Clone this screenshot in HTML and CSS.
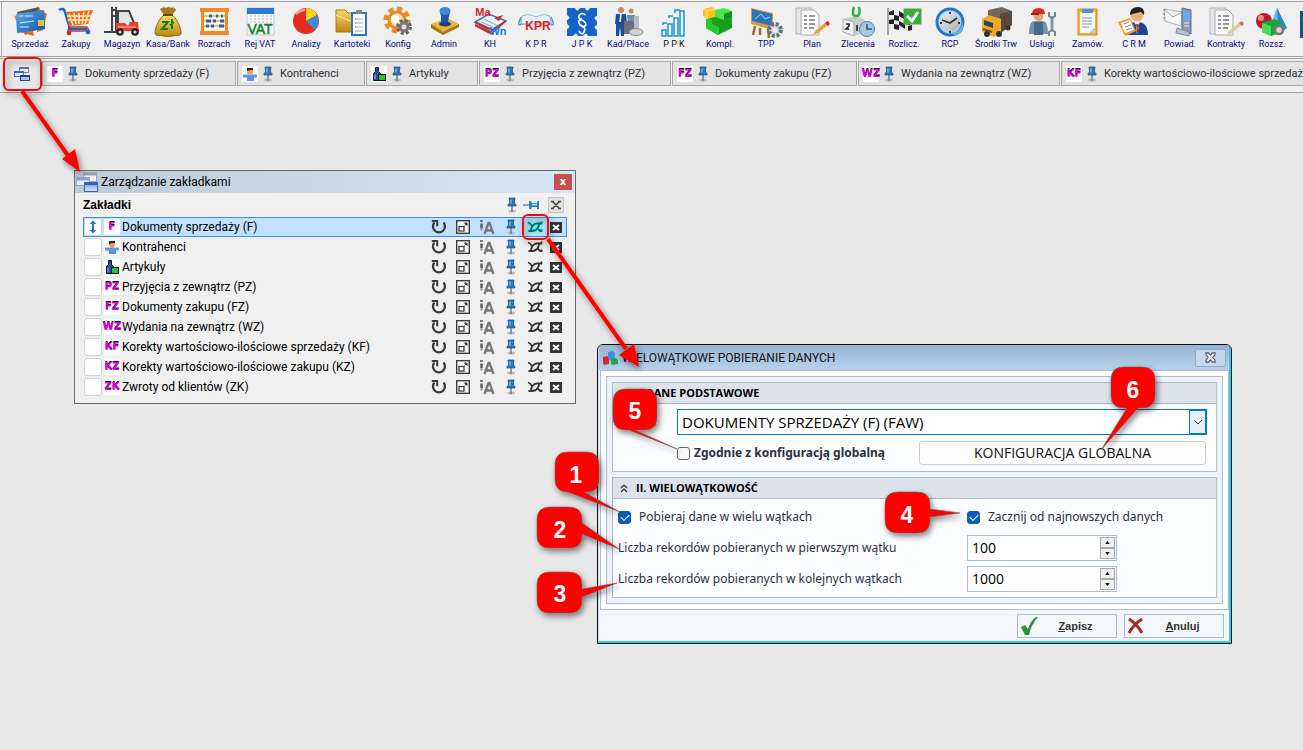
FILE: index.html
```html
<!DOCTYPE html>
<html lang="pl">
<head>
<meta charset="utf-8">
<title>Zarządzanie zakładkami</title>
<link rel="stylesheet" href="styles.css">
</head>
<body>
<svg class="defs" aria-hidden="true">
  <defs>
    <linearGradient id="gBlue" x1="0" y1="0" x2="1" y2="1"><stop offset="0" stop-color="#5fb0ee"/><stop offset="1" stop-color="#0b4fa8"/></linearGradient>
    <linearGradient id="gGold" x1="0" y1="0" x2="0" y2="1"><stop offset="0" stop-color="#fbd96b"/><stop offset="1" stop-color="#bf8410"/></linearGradient>
    <linearGradient id="gGrey" x1="0" y1="0" x2="1" y2="1"><stop offset="0" stop-color="#fafafa"/><stop offset="1" stop-color="#9aa3ab"/></linearGradient>
    <linearGradient id="gWin" x1="0" y1="0" x2="0" y2="1"><stop offset="0" stop-color="#6d9be8"/><stop offset="1" stop-color="#dfe9fb"/></linearGradient>
    <filter id="shadow" x="-30%" y="-30%" width="170%" height="170%"><feDropShadow dx="2" dy="3" stdDeviation="3" flood-color="#000" flood-opacity=".5"/></filter>
  </defs>
  <symbol id="pin" viewBox="0 0 12 16">
    <ellipse cx="6" cy="14" rx="4" ry="1.500" fill="#bbb"/>
    <path d="M6 9v6" stroke="#777" stroke-width="1.400"/>
    <path d="M3 1h6v1.500H8.500V6L10 7.500V9H2V7.500L3.500 6V2.500H3z" fill="#2d74b8" stroke="#174f8c" stroke-width=".7"/>
    <path d="M5 2.500V6.500" stroke="#a8d4f5"/>
  </symbol>
  <symbol id="refresh" viewBox="0 0 16 16">
    <path d="M3.400 3.500A6 6 0 1 0 12.500 3.500" fill="none" stroke="#3a3a3a" stroke-width="2.300"/>
    <path d="M0.800 2h5.400v5.200" fill="none" stroke="#3a3a3a" stroke-width="2"/>
  </symbol>
  <symbol id="expand" viewBox="0 0 16 16">
    <rect x="1.700" y="1.700" width="12.600" height="12.600" fill="#f8f8f8" stroke="#3c3c3c" stroke-width="1.400"/>
    <rect x="4" y="7.500" width="5" height="4.500" fill="#fff" stroke="#3c3c3c" stroke-width="1.300"/>
    <path d="M9.500 4h2.500v2.500zM9.500 6.500l2-2" fill="#3c3c3c" stroke="#3c3c3c"/>
  </symbol>
  <symbol id="sortaz" viewBox="0 0 16 16">
    <path d="M2.500 1v2M2.500 4.500V9" stroke="#666" stroke-width="2.600"/><path d="M1 9.500h3L2.500 12z" fill="#6b7fa0"/>
    <path d="M5.500 15 9.500 4h1l4 11M7 11.500h6" fill="none" stroke="#777" stroke-width="2.300"/>
  </symbol>
  <symbol id="threads" viewBox="0 0 18 14">
    <path d="M5 10.500C5 7 8 3 12 3.500h4M2.500 11H6c4 0 7-3 7-7M2 2.500C4 3 4.500 4 6 6M11.500 8c2 3 2.500 3 4.500 3M15.500 1.500v2M15.500 9.500V12" fill="none" stroke="currentColor" stroke-width="1.800"/>
  </symbol>
  <symbol id="closebox" viewBox="0 0 14 14">
    <rect x="1" y="2" width="12" height="11" fill="#333"/><path d="M4 5l6 5M10 5l-6 5" stroke="#fff" stroke-width="2"/>
  </symbol>
  <symbol id="windows" viewBox="0 0 24 22">
    <rect x="8.500" y="1.500" width="13" height="9" fill="#f4f4f4" stroke="#a4a9b4"/><path d="M8 3h14" stroke="#9aa0ae" stroke-width="3"/>
    <rect x="1.500" y="6.500" width="13" height="8" fill="#e6ecf8" stroke="#8fa3cc"/><path d="M1 8h14" stroke="#89a3dc" stroke-width="3"/>
    <rect x="9.500" y="11.500" width="13" height="9" fill="url(#gWin)" stroke="#3c5ea8"/><path d="M9 13h14" stroke="#2f5fc0" stroke-width="2"/>
  </symbol>
  <symbol id="person" viewBox="0 0 16 16">
    <rect width="16" height="16" fill="#fff"/><circle cx="8" cy="5.500" r="3" fill="#f0a030"/><path d="M5 5V2h6v2H8z" fill="#222"/><path d="M1 8.500h14v3h-3V15H5v-3.500H1z" fill="#5a93f5"/>
  </symbol>
  <symbol id="bottle" viewBox="0 0 16 16">
    <rect width="16" height="16" fill="#fff"/><path d="M4.500 1.500h3v4l2 2v7h-7v-7l2-2z" fill="#1e50b4" stroke="#111"/><path d="M4 9v4" stroke="#9cf"/><rect x="7.500" y="8.500" width="7" height="6" fill="#1ec832" stroke="#111"/>
  </symbol>
</svg>

<header class="top">
  <nav class="toolbar" aria-label="Moduły">
    <button class="tool"><svg viewBox="0 0 36 32"><path d="M5 6 27 1l6 18-20 10z" fill="#555"/><path d="M2 9 8 26l14 4-1-6z" fill="#e0662c"/><path d="M26 2l9 6-4 16-6 2z" fill="#c2714a"/><path d="M4 8 32 4l1 19-28 4z" fill="url(#gBlue)"/><path d="M7 10h4M13 10h8M8 17l14-2M8 21h9" stroke="#d6ecff" stroke-width="1.200"/><rect x="26" y="14" width="6" height="6" fill="#f2c230"/></svg>Sprzedaż</button>
    <button class="tool"><svg viewBox="0 0 36 32"><path d="M1 4q5-3 6 2l5 17h17" fill="none" stroke="#1668c4" stroke-width="2.500"/><path d="M8 6 35 4l-5 14-19 2z" fill="#ee6a24"/><path d="M11 8l4 11M16 7l2 11M21 7v11M26 6l-2 12M31 5l-4 13M9 10h24M10 14h21" stroke="#fff0b8" stroke-width="1.500"/><path d="M11 21h18l2 4H10z" fill="none" stroke="#c43a2c" stroke-width="1.500"/><circle cx="11" cy="27" r="2.300" fill="#d42020"/><circle cx="30" cy="26" r="2.300" fill="#1668c4"/></svg>Zakupy</button>
    <button class="tool"><svg viewBox="0 0 36 32"><path d="M8 1v26M12 1v26M8 4h4M8 10h4M0 26h13" fill="none" stroke="#444" stroke-width="2"/><path d="M14 18V5h11l5 12" fill="#dfe4e6" stroke="#444" stroke-width="2"/><path d="M12 17h9l3 3 2-4h8l1 9H12z" fill="#e8402c"/><path d="M14 21h18" stroke="#ff9a80" stroke-width="1.500"/><circle cx="16" cy="26" r="3.800" fill="#222"/><circle cx="31" cy="26" r="3.800" fill="#222"/><circle cx="16" cy="26" r="1.500" fill="#ddd"/><circle cx="31" cy="26" r="1.500" fill="#ddd"/></svg>Magazyn</button>
    <button class="tool"><svg viewBox="0 0 36 32"><path d="M10 3q4-3 6-1 3-2 5 0 3-2 5 2l-4 5h-8z" fill="#a87c12"/><path d="M14 9h8c7 5 11 19 8 20q-12 3-24 0C3 27 8 13 14 9z" fill="url(#gGold)" stroke="#8a6510"/><path d="M13 9h10" stroke="#614508" stroke-width="2"/><path d="M12 16h6l-6 7h6M22 13v10M20 19l4-3" fill="none" stroke="#117a1a" stroke-width="2"/></svg>Kasa/Bank</button>
    <button class="tool"><svg viewBox="0 0 36 32"><path d="M5 2h3v26H5zM29 2h3v26h-3zM4 2h29v4H4zM4 25h29v4H4z" fill="#ee8a2a"/><path d="M8 6h21v19H8z" fill="#fff4dc"/><path d="M8 10h21M8 15h21M8 20h21" stroke="#b58c50"/><path d="M13 10h3M20 10h2M25 10h2M10 15h5M17 15h3M24 15h4M10 20h3M15 20h3M23 20h5" stroke="#2a62b0" stroke-width="3"/></svg>Rozrach</button>
    <button class="tool"><svg viewBox="0 0 36 32"><path d="M5 2h27v27H5z" fill="#f4f6f8" stroke="#c3ccd4"/><path d="M5 2h27v6H5z" fill="#2a78d0"/><path d="M8 10h22M8 13h22M8 16h22" stroke="#aeb8c0" stroke-dasharray="2 2"/><text x="18" y="28" text-anchor="middle" class="vat">VAT</text></svg>Rej VAT</button>
    <button class="tool"><svg viewBox="0 0 36 32"><circle cx="18" cy="15" r="13" fill="#e62c20"/><path d="M18 15V2a13 13 0 0 1 11 7z" fill="#ffd21a"/><path d="M18 15 29 9a13 13 0 0 1-2 15z" fill="#3b8be0"/><path d="M8 8q4-4 9-4" stroke="#ff9d90" stroke-width="2.500" fill="none"/></svg>Analizy</button>
    <button class="tool"><svg viewBox="0 0 36 32"><path d="M2 4h9l3 3h16v19H2z" fill="url(#gGold)" stroke="#a87816"/><path d="M2 9l14 6 14-6" fill="none" stroke="#fff0b0"/><rect x="18" y="7" width="14" height="22" fill="#fff" stroke="#2c77c4" stroke-width="2"/><rect x="22" y="4" width="6" height="4" fill="#888"/><path d="M21 13h8M21 17h8M21 21h8M21 25h8" stroke="#99a8bb"/><path d="M21 13h1M21 17h1M21 21h1" stroke="#e33"/></svg>Kartoteki</button>
    <button class="tool"><svg viewBox="0 0 36 32"><circle cx="17" cy="14" r="11" fill="none" stroke="#ec8c26" stroke-width="5" stroke-dasharray="5 3.600"/><circle cx="17" cy="14" r="8" fill="#fce0b4" stroke="#e88a28" stroke-width="3"/><circle cx="24" cy="21" r="6.500" fill="none" stroke="#666" stroke-width="3" stroke-dasharray="3 2.100"/><circle cx="24" cy="21" r="4" fill="#ddd" stroke="#777" stroke-width="3"/><circle cx="15" cy="13" r="4" fill="#fff"/></svg>Konfig</button>
    <button class="tool"><svg viewBox="0 0 36 32"><path d="M5 18l16-6 12 6-16 9z" fill="#e8b63c"/><path d="M5 18v4l12 7v-3zM33 18v3l-16 8v-3z" fill="#a87414"/><path d="M15 10q-3-8 4-8t4 8l-1 7q-3 2-7 0z" fill="#1f5ca8"/><ellipse cx="19" cy="5" rx="5.500" ry="4" fill="#3d86d8"/><ellipse cx="19" cy="18" rx="6" ry="2.500" fill="#17437f"/></svg>Admin</button>
    <button class="tool"><svg viewBox="0 0 36 32"><path d="M3 16 17 8l17 7-14 12z" fill="#e8f2fa" stroke="#2b7fc0" stroke-width="1.500"/><path d="M3 16l17 8 14-9M3 19l17 9" fill="none" stroke="#c22c2c" stroke-width="2"/><path d="M12 13l14 7M9 16l12 5" stroke="#7ba6cf"/><path d="M22 12l5 3 4-6z" fill="#d22"/><text x="11" y="10" text-anchor="middle" class="ma">Ma</text><text x="26" y="29" text-anchor="middle" class="wn">Wn</text></svg>KH</button>
    <button class="tool"><svg viewBox="0 0 36 32"><path d="M3 11l-3 8 6-1M33 11l3 8-6-1" fill="#c9e2f1" stroke="#5b9cc8" stroke-width="1.500"/><path d="M4 10q7-3 14 1 7-4 14-1l1 8H3z" fill="#e6f3fa" stroke="#85b6d4"/><text x="20" y="24" text-anchor="middle" class="kpr">KPR</text></svg>K P R</button>
    <button class="tool"><svg viewBox="0 0 36 32"><path d="M3 2h8q2 5 5 0h5q2 5 5 0h7v8q-5 1 0 5v4q-5 2 0 5v6h-9q-2-5-5 0h-5q-2-5-5 0H3v-7q5-2 0-5v-4q5-2 0-5z" fill="#1565c8"/><path d="M21.500 9Q18 6 15.500 9t2.500 5q5 3 3.500 5.500T17 19M18 13q-4 1-3 4t4 4 1 5-5-1" fill="none" stroke="#fff" stroke-width="1.700"/></svg>J P K</button>
    <button class="tool"><svg viewBox="0 0 36 32"><circle cx="11" cy="4" r="3" fill="#c98a60"/><path d="M6 8h10l1 10h-2l-1 12h-3l-1-9-1 9H6L6 18H5z" fill="#1c4f96"/><path d="M11 8l-1 8" stroke="#fff" stroke-width="1.500"/><circle cx="21" cy="5" r="2.500" fill="#c98a60"/><path d="M17 9h8l1 9h-8z" fill="#6f8fb0"/><path d="M14 15h11v13H14z" fill="#687078"/><path d="M24 10h5v14h-5z" fill="#b5bcc2"/><ellipse cx="26" cy="26" rx="7" ry="3.500" fill="#cdd3d4" stroke="#849084"/></svg>Kad/Płace</button>
    <button class="tool"><svg viewBox="0 0 36 32"><path d="M6 24h4v6H6zM12 18h4v12h-4zM18 12h4v18h-4zM24 5h4v25h-4z" fill="#eaf6fd" stroke="#1e90d2" stroke-width="1.500"/><path d="M7 19v-2h4M13 12v-2h4M19 7V4h5" fill="none" stroke="#1e90d2" stroke-width="1.500"/></svg><span class="plain">P P K</span></button>
    <button class="tool"><svg viewBox="0 0 36 32"><path d="M4 10l9-3 6 5 11-3v13l-14 7-12-7z" fill="#16a01c"/><path d="M4 10l6 4v4l7 3v8L4 22z" fill="#2fc634"/><path d="M13 4l9-2 8 3v6l-8 3-9-3z" fill="#4ee04e"/><path d="M22 8l8-3v6l-8 3z" fill="#129018"/><path d="M1 3l9-2 3 2v8l-8 2-4-3z" fill="#f8c31c"/><path d="M1 3l4 2v8M5 5l8-2" fill="none" stroke="#ffe98a"/></svg>Kompl.</button>
    <button class="tool"><svg viewBox="0 0 36 32"><path d="M7 20l-2 9M20 23l1 9M12 22v7" stroke="#9a6a2a" stroke-width="2.500"/><path d="M3 2l22 5v17L3 18z" fill="#d99a38"/><path d="M4 3l20 5v12L4 15z" fill="#2d74bf"/><path d="M7 13l6-5 4 5 5-2" stroke="#a8d2f6" fill="none"/><circle cx="27" cy="24" r="6" fill="#ccd2d6" stroke="#65727c" stroke-width="4" stroke-dasharray="3 1.700"/><circle cx="27" cy="24" r="2.500" fill="#f0f0f0"/></svg>TPP</button>
    <button class="tool"><svg viewBox="0 0 36 32"><path d="M2 2h16v26H2z" fill="#e5e7ea" stroke="#b1b5ba"/><path d="M7 4h13l5 5v20H7z" fill="#fafafa" stroke="#aaa"/><path d="M10 10h3M15 10h6M10 14h3M15 14h6M10 18h3M15 18h6M10 22h3M15 22h5" stroke="#777" stroke-width="1.700"/><path d="M19 29l2-4 11-9 3 2-11 9z" fill="#e4a33c"/><path d="M31 17l3-2 2 3-2 2z" fill="#d22"/></svg>Plan</button>
    <button class="tool"><svg viewBox="0 0 36 32"><path d="M3 13l14-3 8 4v12l-11 4-11-4z" fill="#c6cbd0"/><path d="M3 13l11 3v14L3 26z" fill="#f0f1f2" stroke="#aaa"/><path d="M6 18h3v2l-3 3h3M17 19v6" fill="none" stroke="#222" stroke-width="1.600"/><path d="M14 1q-3 9 2 9t3-9" fill="none" stroke="#2fb03c" stroke-width="2.500"/><circle cx="27" cy="23" r="7.500" fill="#a6cbe0" stroke="#52849e"/><path d="M27 18v5h5" fill="none" stroke="#275676" stroke-width="1.500"/></svg>Zlecenia</button>
    <button class="tool"><svg viewBox="0 0 36 32"><path d="M2 2v27" stroke="#555"/><path d="M3 6q7-4 13 0t12 0v17q-7 5-13 0t-12 1z" fill="#e8e8e8"/><path d="M3 6l5-2v5H3zM13 5l5 3v5l-5-3zM8 9l5 1v5l-5-1zM3 14l5-1v5H3zM13 15l6 3v5l-6-4zM19 12l5 2v5l-5-1zM8 18l5 1v5l-5-1zM22 20l4-1v5l-4 1z" fill="#222"/><rect x="18" y="3" width="17" height="15" fill="#33b038" stroke="#5e9d5e"/><path d="M21 10l5 5 6-9" fill="none" stroke="#fff" stroke-width="3"/></svg>Rozlicz.</button>
    <button class="tool"><svg viewBox="0 0 36 32"><circle cx="18" cy="16" r="13" fill="url(#gGrey)" stroke="#1f78ca" stroke-width="3"/><circle cx="18" cy="16" r="10.500" fill="none" stroke="#bcd8ef"/><path d="M10 14l8 3 7-5M18 6v2M18 25v2M8 17h2M26 17h2" stroke="#333" stroke-width="1.800" fill="none"/><path d="M21 27q9-3 10-12v9q-3 6-10 5z" fill="#50b3f2"/></svg>RCP</button>
    <button class="tool"><svg viewBox="0 0 36 32"><path d="M10 4 24 1l10 4v14l-11 8-13-9z" fill="#74685e"/><path d="M22 8l12-3v14l-12 7z" fill="#55483f"/><path d="M4 13l7-4 12 4v15l-7 3-12-5z" fill="#eda928"/><path d="M6 14l9 3v5l-9-3z" fill="#30455c"/><path d="M5 23l9 3" stroke="#7a5208" stroke-width="2"/><circle cx="9" cy="28" r="3" fill="#333"/><circle cx="21" cy="28" r="3" fill="#333"/><circle cx="30" cy="22" r="2.500" fill="#333"/></svg>Środki Trw</button>
    <button class="tool"><svg viewBox="0 0 36 32"><path d="M5 28q0-14 6-13h7q6-1 6 13z" fill="#7192ac"/><path d="M10 16h9v13h-9z" fill="#48698a"/><circle cx="14.500" cy="10" r="5" fill="#dca878"/><path d="M8 8q0-6 7-6 6 0 6 6z" fill="#d62c22"/><path d="M7 8h8" stroke="#a81c16" stroke-width="2"/><path d="M28 11v14" stroke="#8a98a2" stroke-width="3"/><path d="M25 6v4q3 3 6 0V6M25 30v-4q3-3 6 0v4" fill="none" stroke="#78868f" stroke-width="2"/></svg>Usługi</button>
    <button class="tool"><svg viewBox="0 0 36 32"><rect x="8" y="3" width="19" height="26" fill="#f6b22e" stroke="#d58b14"/><path d="M10 6h15v21H10z" fill="#f4faff"/><path d="M12 3h11v4H12z" fill="#4b94d4"/><path d="M12 12h10M12 15h10M12 18h10M12 21h7" stroke="#7e98b0"/><path d="M19 27l6-6v6z" fill="#b7cbdc"/></svg>Zamów.</button>
    <button class="tool"><svg viewBox="0 0 36 32"><circle cx="21" cy="9" r="6.500" fill="#eeb078"/><path d="M14 9q0-8 8-8 7 0 6 8l-3-3q-6 1-11 3z" fill="#222"/><path d="M11 29q0-14 10-13 11 0 11 13z" fill="#1d4797"/><path d="M18 16l3 5 3-5zM20 20l1 8 2-7z" fill="#fff"/><path d="M20 18h2l1 6-2 3z" fill="#d32"/><path d="M2 16l12-4 6 13-11 5z" fill="#eda02c"/><path d="M5 17l9-3 4 10-9 3z" fill="#fff"/><path d="M8 18l5-2M9 21l6-2M10 24l6-2" stroke="#789"/></svg>C R M</button>
    <button class="tool"><svg viewBox="0 0 36 32"><path d="M2 3l18 3-1 14L3 15z" fill="#f7f8fb" stroke="#a8afc0"/><path d="M2 3l9 8 9-5" fill="none" stroke="#98a4b8"/><path d="M2 3v12" stroke="#d55" stroke-dasharray="2 2"/><path d="M20 2l9 2v24l-9-3z" fill="#8a9bb1" stroke="#5c6f88"/><path d="M21 5l7 2v8l-7-2z" fill="#67aaf0"/><path d="M15 22l12 4v4l-13-3z" fill="#b7c1cc" stroke="#7c8b9b"/><path d="M22 17h5M22 20h5" stroke="#e9eef4"/></svg>Powiad.</button>
    <button class="tool"><svg viewBox="0 0 36 32"><path d="M2 2h16v26H2z" fill="#e5e7ea" stroke="#b1b5ba"/><path d="M7 4h13l5 5v20H7z" fill="#fafafa" stroke="#aaa"/><path d="M10 10h3M15 10h6M10 14h3M15 14h6M10 18h3M15 18h6M10 22h3M15 22h5" stroke="#777" stroke-width="1.700"/><path d="M19 29l2-4 11-9 3 2-11 9z" fill="#e4c69c"/><path d="M31 17l3-2 2 3-2 2z" fill="#d66"/></svg>Kontrakty</button>
    <button class="tool"><svg viewBox="0 0 36 32"><path d="M23 2l10 20-8 6-9-5z" fill="#2585d6"/><path d="M23 2l2 26-9-5z" fill="#69baf2"/><circle cx="10" cy="15" r="8" fill="#b81c28"/><circle cx="7" cy="12" r="3" fill="#ec8a8a"/><path d="M8 17l12-4 9 4v9l-12 4-9-4z" fill="#19a836"/><path d="M8 17l9 3v10l-9-4z" fill="#4fd85c"/><circle cx="25" cy="24" r="4" fill="#d4d8d4" stroke="#777" stroke-width="2.500"/></svg>Rozsz.</button>
    <button class="tool" aria-label="Następny"><svg viewBox="0 0 36 32"><path d="M0 5h36v34H0z" fill="#12587e"/><path d="M2 12l14-4v14z" fill="#eef"/></svg></button>
  </nav>

  <div class="tabbar">
    <button class="tabs-manage" aria-label="Zarządzanie zakładkami"><svg class="s18" viewBox="0 0 18 16"><rect x="6.500" y="1.500" width="9" height="5" fill="#e8e8e8" stroke="#7d8598"/><path d="M6 2h10" stroke="#6a7388" stroke-width="2"/><rect x="1.500" y="5.500" width="9" height="5" fill="#dbe5f8" stroke="#4a71b8"/><path d="M1 6h10" stroke="#3e66b0" stroke-width="2"/><rect x="7.500" y="9.500" width="9" height="5" fill="#a8c0ee" stroke="#27458c"/><path d="M7 10h10" stroke="#27458c" stroke-width="2"/></svg></button>
    <button class="tab t1"><span class="code">F</span><svg class="pin"><use href="#pin"/></svg>Dokumenty sprzedaży (F)</button>
    <button class="tab t2"><svg class="s16"><use href="#person"/></svg><svg class="pin"><use href="#pin"/></svg>Kontrahenci</button>
    <button class="tab t3"><svg class="s16"><use href="#bottle"/></svg><svg class="pin"><use href="#pin"/></svg>Artykuły</button>
    <button class="tab t4"><span class="code">PZ</span><svg class="pin"><use href="#pin"/></svg>Przyjęcia z zewnątrz (PZ)</button>
    <button class="tab t5"><span class="code">FZ</span><svg class="pin"><use href="#pin"/></svg>Dokumenty zakupu (FZ)</button>
    <button class="tab t6"><span class="code">WZ</span><svg class="pin"><use href="#pin"/></svg>Wydania na zewnątrz (WZ)</button>
    <button class="tab t7"><span class="code">KF</span><svg class="pin"><use href="#pin"/></svg>Korekty wartościowo-ilościowe sprzedaży</button>
  </div>
</header>

<main class="desktop">
  <section class="win tabs-win" aria-labelledby="tw">
    <div class="tw-title"><svg class="s24"><use href="#windows"/></svg><span id="tw">Zarządzanie zakładkami</span><button class="tw-close" aria-label="Zamknij">x</button></div>
    <div class="tw-head"><h2>Zakładki</h2>
      <button class="ic" aria-label="Przypnij wszystkie"><svg class="pin"><use href="#pin"/></svg></button>
      <button class="ic" aria-label="Odepnij wszystkie"><svg class="s18" viewBox="0 0 18 16"><path d="M0 8h7" stroke="#5b93bd" stroke-width="1.500"/><path d="M6 4h2l1 2h5V4h2v8h-2v-2H9l-1 2H6z" fill="#2d80c4"/><path d="M9 7.500h5" stroke="#b9e0fa" stroke-width="1.500"/></svg></button>
      <button class="allclose" aria-label="Zamknij wszystkie"><svg viewBox="0 0 14 14"><path d="M2 3.500h3M9 3.500h3M2 10.500h3M9 10.500h3M4 4l6 6M10 4l-6 6" stroke="#444" stroke-width="1.500"/></svg></button>
    </div>
    <ul class="rows">
      <li class="row selected"><button class="grip" aria-label="Przesuń"><svg viewBox="0 0 16 16"><path d="M8 3v10" stroke="#2b6fe8" stroke-width="2"/><path d="M4.500 5 8 1.500 11.500 5zM4.500 11 8 14.500 11.500 11z" fill="#2b6fe8"/></svg></button><span class="code">F</span><span class="name">Dokumenty sprzedaży (F)</span><button class="ic" aria-label="Odśwież"><svg class="s16"><use href="#refresh"/></svg></button><button class="ic" aria-label="Otwórz w oknie"><svg class="s16"><use href="#expand"/></svg></button><button class="ic" aria-label="Zmień nazwę"><svg class="s16"><use href="#sortaz"/></svg></button><button class="ic" aria-label="Przypnij"><svg class="pin"><use href="#pin"/></svg></button><button class="ic threads" aria-label="Wątki"><svg class="s18"><use href="#threads"/></svg></button><button class="ic x" aria-label="Zamknij"><svg class="s14"><use href="#closebox"/></svg></button></li>
      <li class="row"><button class="grip" aria-label="Przesuń"></button><svg class="s16"><use href="#person"/></svg><span class="name">Kontrahenci</span><button class="ic" aria-label="Odśwież"><svg class="s16"><use href="#refresh"/></svg></button><button class="ic" aria-label="Otwórz w oknie"><svg class="s16"><use href="#expand"/></svg></button><button class="ic" aria-label="Zmień nazwę"><svg class="s16"><use href="#sortaz"/></svg></button><button class="ic" aria-label="Przypnij"><svg class="pin"><use href="#pin"/></svg></button><button class="ic threads" aria-label="Wątki"><svg class="s18"><use href="#threads"/></svg></button><button class="ic x" aria-label="Zamknij"><svg class="s14"><use href="#closebox"/></svg></button></li>
      <li class="row"><button class="grip" aria-label="Przesuń"></button><svg class="s16"><use href="#bottle"/></svg><span class="name">Artykuły</span><button class="ic" aria-label="Odśwież"><svg class="s16"><use href="#refresh"/></svg></button><button class="ic" aria-label="Otwórz w oknie"><svg class="s16"><use href="#expand"/></svg></button><button class="ic" aria-label="Zmień nazwę"><svg class="s16"><use href="#sortaz"/></svg></button><button class="ic" aria-label="Przypnij"><svg class="pin"><use href="#pin"/></svg></button><button class="ic threads" aria-label="Wątki"><svg class="s18"><use href="#threads"/></svg></button><button class="ic x" aria-label="Zamknij"><svg class="s14"><use href="#closebox"/></svg></button></li>
      <li class="row"><button class="grip" aria-label="Przesuń"></button><span class="code">PZ</span><span class="name">Przyjęcia z zewnątrz (PZ)</span><button class="ic" aria-label="Odśwież"><svg class="s16"><use href="#refresh"/></svg></button><button class="ic" aria-label="Otwórz w oknie"><svg class="s16"><use href="#expand"/></svg></button><button class="ic" aria-label="Zmień nazwę"><svg class="s16"><use href="#sortaz"/></svg></button><button class="ic" aria-label="Przypnij"><svg class="pin"><use href="#pin"/></svg></button><button class="ic threads" aria-label="Wątki"><svg class="s18"><use href="#threads"/></svg></button><button class="ic x" aria-label="Zamknij"><svg class="s14"><use href="#closebox"/></svg></button></li>
      <li class="row"><button class="grip" aria-label="Przesuń"></button><span class="code">FZ</span><span class="name">Dokumenty zakupu (FZ)</span><button class="ic" aria-label="Odśwież"><svg class="s16"><use href="#refresh"/></svg></button><button class="ic" aria-label="Otwórz w oknie"><svg class="s16"><use href="#expand"/></svg></button><button class="ic" aria-label="Zmień nazwę"><svg class="s16"><use href="#sortaz"/></svg></button><button class="ic" aria-label="Przypnij"><svg class="pin"><use href="#pin"/></svg></button><button class="ic threads" aria-label="Wątki"><svg class="s18"><use href="#threads"/></svg></button><button class="ic x" aria-label="Zamknij"><svg class="s14"><use href="#closebox"/></svg></button></li>
      <li class="row"><button class="grip" aria-label="Przesuń"></button><span class="code">WZ</span><span class="name">Wydania na zewnątrz (WZ)</span><button class="ic" aria-label="Odśwież"><svg class="s16"><use href="#refresh"/></svg></button><button class="ic" aria-label="Otwórz w oknie"><svg class="s16"><use href="#expand"/></svg></button><button class="ic" aria-label="Zmień nazwę"><svg class="s16"><use href="#sortaz"/></svg></button><button class="ic" aria-label="Przypnij"><svg class="pin"><use href="#pin"/></svg></button><button class="ic threads" aria-label="Wątki"><svg class="s18"><use href="#threads"/></svg></button><button class="ic x" aria-label="Zamknij"><svg class="s14"><use href="#closebox"/></svg></button></li>
      <li class="row"><button class="grip" aria-label="Przesuń"></button><span class="code">KF</span><span class="name">Korekty wartościowo-ilościowe sprzedaży (KF)</span><button class="ic" aria-label="Odśwież"><svg class="s16"><use href="#refresh"/></svg></button><button class="ic" aria-label="Otwórz w oknie"><svg class="s16"><use href="#expand"/></svg></button><button class="ic" aria-label="Zmień nazwę"><svg class="s16"><use href="#sortaz"/></svg></button><button class="ic" aria-label="Przypnij"><svg class="pin"><use href="#pin"/></svg></button><button class="ic threads" aria-label="Wątki"><svg class="s18"><use href="#threads"/></svg></button><button class="ic x" aria-label="Zamknij"><svg class="s14"><use href="#closebox"/></svg></button></li>
      <li class="row"><button class="grip" aria-label="Przesuń"></button><span class="code">KZ</span><span class="name">Korekty wartościowo-ilościowe zakupu (KZ)</span><button class="ic" aria-label="Odśwież"><svg class="s16"><use href="#refresh"/></svg></button><button class="ic" aria-label="Otwórz w oknie"><svg class="s16"><use href="#expand"/></svg></button><button class="ic" aria-label="Zmień nazwę"><svg class="s16"><use href="#sortaz"/></svg></button><button class="ic" aria-label="Przypnij"><svg class="pin"><use href="#pin"/></svg></button><button class="ic threads" aria-label="Wątki"><svg class="s18"><use href="#threads"/></svg></button><button class="ic x" aria-label="Zamknij"><svg class="s14"><use href="#closebox"/></svg></button></li>
      <li class="row"><button class="grip" aria-label="Przesuń"></button><span class="code">ZK</span><span class="name">Zwroty od klientów (ZK)</span><button class="ic" aria-label="Odśwież"><svg class="s16"><use href="#refresh"/></svg></button><button class="ic" aria-label="Otwórz w oknie"><svg class="s16"><use href="#expand"/></svg></button><button class="ic" aria-label="Zmień nazwę"><svg class="s16"><use href="#sortaz"/></svg></button><button class="ic" aria-label="Przypnij"><svg class="pin"><use href="#pin"/></svg></button><button class="ic threads" aria-label="Wątki"><svg class="s18"><use href="#threads"/></svg></button><button class="ic x" aria-label="Zamknij"><svg class="s14"><use href="#closebox"/></svg></button></li>
    </ul>
  </section>

  <form class="win dialog" aria-labelledby="dt">
    <div class="d-title"><svg class="s16" viewBox="0 0 16 16"><path d="M1 7l4-1 2 2v6l-5 1-1-2z" fill="#d62830"/><path d="M6 2l5-1 2 2v6l-5 1-2-2z" fill="#3f8fe0"/><path d="M9 9l5-1 2 2v4l-5 1-2-1z" fill="#28a83a"/></svg><span id="dt">WIELOWĄTKOWE POBIERANIE DANYCH</span><button type="button" class="d-close" aria-label="Zamknij"><svg viewBox="0 0 14 12"><path d="M2 1h3l2 2.500L9 1h3v2l-2.500 3L12 9v2H9L7 8.500 5 11H2V9l2.500-3L2 3z" fill="#e8eef5" stroke="#4c5566" stroke-width="1.200"/></svg></button></div>
    <div class="d-body">
      <div class="panel">
        <section class="group">
          <h3><svg viewBox="0 0 10 10"><path d="M2 5l3-3 3 3M2 9l3-3 3 3" fill="none" stroke="#333" stroke-width="1.200"/></svg>I. DANE PODSTAWOWE</h3>
          <div class="g1">
            <label class="lab" for="src">:</label>
            <div class="combo"><select id="src" aria-label="Dane"><option>DOKUMENTY SPRZEDAŻY (F) (FAW)</option></select><svg class="chev" viewBox="0 0 17 24"><path d="M.500 .500h16v23H.500z" fill="#e5f1fb" stroke="#0078d4"/><path d="M5 10l4 4 4-4" fill="none" stroke="#444"/></svg></div>
            <div class="cfg"><input type="checkbox" id="glob"><label for="glob">Zgodnie z konfiguracją globalną</label><button type="button">KONFIGURACJA GLOBALNA</button></div>
          </div>
        </section>
        <section class="group">
          <h3><svg viewBox="0 0 10 10"><path d="M2 5l3-3 3 3M2 9l3-3 3 3" fill="none" stroke="#333" stroke-width="1.200"/></svg>II. WIELOWĄTKOWOŚĆ</h3>
          <div class="g2">
            <div class="check"><input type="checkbox" id="multi" checked><label for="multi">Pobieraj dane w wielu wątkach</label></div>
            <div class="check"><input type="checkbox" id="newest" checked><label for="newest">Zacznij od najnowszych danych</label></div>
            <label for="n1">Liczba rekordów pobieranych w pierwszym wątku</label>
            <div class="spin"><input type="text" inputmode="numeric" id="n1" value="100"><div><button type="button" aria-label="Więcej"><svg viewBox="0 0 8 4"><path d="M1 4l3-4 3 4z"/></svg></button><button type="button" aria-label="Mniej"><svg viewBox="0 0 8 4"><path d="M1 0l3 4 3-4z"/></svg></button></div></div>
            <label for="n2">Liczba rekordów pobieranych w kolejnych wątkach</label>
            <div class="spin"><input type="text" inputmode="numeric" id="n2" value="1000"><div><button type="button" aria-label="Więcej"><svg viewBox="0 0 8 4"><path d="M1 4l3-4 3 4z"/></svg></button><button type="button" aria-label="Mniej"><svg viewBox="0 0 8 4"><path d="M1 0l3 4 3-4z"/></svg></button></div></div>
          </div>
        </section>
      </div>
    </div>
    <div class="d-foot">
      <button type="button"><svg viewBox="0 0 20 20"><path d="M2 11l4-2 3 4q3-9 8-12h2Q12 9 10 19H6z" fill="#2f9034"/></svg><span><u>Z</u>apisz</span></button>
      <button type="button"><svg viewBox="0 0 20 20"><path d="M3 3q8 5 13 14M16 3Q8 8 3 17" fill="none" stroke="#a82a1c" stroke-width="3"/></svg><span><u>A</u>nuluj</span></button>
    </div>
  </form>
</main>

<svg class="notes" viewBox="0 0 1303 750" aria-hidden="true">
  <g filter="url(#shadow)" fill="none" stroke="#e80c0c" stroke-width="2">
    <rect x="4" y="58" width="37" height="32" rx="5"/>
    <rect x="523" y="215" width="25" height="24" rx="5"/>
  </g>
  <g filter="url(#shadow)" stroke="#f00" stroke-width="4">
    <path d="M22 91 69 157"/><path d="M548 239 626 349"/>
    <path d="M80 172 62 159 75 149z" fill="#f00" stroke="none"/><path d="M639 367 619 355 634 344z" fill="#f00" stroke="none"/>
  </g>
  <g filter="url(#shadow)" fill="#f00" stroke="#666" stroke-width="1" stroke-opacity=".6">
    <path d="M568 452h18q13 0 13 13v14q0 13-13 13h-2L620 512 568 492q-13 0-13-13v-14q0-13 13-13z"/>
    <path d="M550 507h19q13 0 13 13v3L619 549 582 534v1q0 13-13 13h-19q-13 0-13-13v-15q0-13 13-13z"/>
    <path d="M550 572h19q13 0 13 13v4L617 583 582 597v3q0 13-13 13h-19q-13 0-13-13v-15q0-13 13-13z"/>
    <path d="M898 492h19q13 0 13 13v4L960 513 930 517v3q0 13-13 13h-19q-13 0-13-13v-15q0-13 13-13z"/>
    <path d="M626 389h18q13 0 13 13v15q0 13-13 13h-9L677 449 629 430h-3q-13 0-13-13v-15q0-13 13-13z"/>
    <path d="M1124 367h18q13 0 13 13v15q0 13-13 13h-4L1101 450 1127 408h-3q-13 0-13-13v-15q0-13 13-13z"/>
  </g>
  <g class="num"><text x="576" y="483">1</text><text x="560" y="538">2</text><text x="560" y="602">3</text><text x="907" y="523">4</text><text x="635" y="419">5</text><text x="1133" y="398">6</text></g>
</svg>
</body>
</html>
```
FILE: styles.css
```css
* { box-sizing: border-box; }
body { margin: 0; min-height: 100vh; position: relative; overflow: hidden; background: #e8e8e8; color: #000; font: 12px/16px Roboto, "Open Sans", sans-serif; }
button, input, select { font: inherit; color: inherit; margin: 0; }
button { padding: 0; border: 0; background: none; }
svg { flex: none; display: block; }
.defs { position: absolute; width: 0; height: 0; }
.s14 { width: 14px; height: 14px; }
.s16 { width: 16px; height: 16px; }
.s18 { width: 18px; height: 16px; }
.s24 { width: 24px; height: 22px; }
.pin { width: 12px; height: 16px; }

.top { background: #f0f0f0; padding-top: 1px; border-bottom: 1px solid #a0a0a0; overflow: hidden; }
.toolbar { display: flex; padding: 4px 0 6px 7px; border-top: 1px solid #a0a0a0; border-bottom: 1px solid #a0a0a0; box-shadow: inset 1px 0 #f0f0f0, inset 2px 0 #a8a8a8; }
.tool { flex: 0 0 46px; min-width: 0; display: flex; flex-direction: column; align-items: center; font: 9px/12px Roboto, sans-serif; color: #0a0a80; white-space: nowrap; }
.tool svg { width: 36px; height: 32px; }
.plain { color: #111; }
.vat { font: 14px "Liberation Sans", sans-serif; fill: #0a8028; stroke: #0a8028; stroke-width: .5px; }
.ma, .wn { font: bold 11px "Liberation Sans", sans-serif; fill: #d81c24; }
.wn { fill: #1e78d0; }
.kpr { font: bold 12px "Liberation Sans", sans-serif; fill: #e01c24; }

.tabbar { display: flex; gap: 1px; margin-top: 1px; padding: 2px 0 6px 2px; border-top: 1px solid #a0a0a0; }
.tabs-manage { flex: 0 0 39px; display: grid; place-items: center; background: #e8e8e8; }
.tab { flex: none; height: 25px; display: flex; align-items: center; gap: 4px; padding-left: 4px; border: 1px solid #a8a8a8; background: #e3e3e3; color: #30303a; font-size: 11px; white-space: nowrap; overflow: hidden; text-align: left; }
.tab .pin { margin-right: 2px; }
.t1 { width: 194px; }
.t2 { width: 128px; }
.t3 { width: 112px; }
.t4 { width: 192px; }
.t5 { width: 185px; }
.t6 { width: 202px; }
.t7 { width: 300px; }
.code { flex: 0 0 16px; width: 16px; min-width: 0; height: 16px; display: flex; justify-content: center; background: #fff; color: #e000e0; font: bold 10px/16px "DejaVu Sans", sans-serif; text-shadow: 0 -1px #000; }

.win { position: absolute; }
.tabs-win { left: 74px; top: 170px; width: 502px; padding-bottom: 6px; border: 1px solid #6a6a6a; background: #f0f0f0; }
.tw-title { display: flex; align-items: center; height: 22px; gap: 2px; padding-right: 3px; background: linear-gradient(90deg, #bccbda, #d8e6f3); }
.tw-title span { flex: 1; }
.tw-close { width: 18px; height: 16px; background: #c75050; color: #fff; font: bold 10px/14px "DejaVu Sans", sans-serif; }
.tw-head { display: flex; align-items: center; height: 24px; padding: 0 11px 0 8px; }
.tw-head h2 { flex: 1; margin: 0; font: bold 12px/16px "Liberation Sans", sans-serif; }
.tw-head .ic { width: 20px; }
.allclose { width: 16px; height: 16px; margin-left: 6px; border: 1px solid #c4c4bc; background: #e2e2de; }
.rows { list-style: none; margin: 0; padding: 0 8px; }
.row { display: flex; align-items: center; height: 20px; padding-right: 1px; border: 1px solid transparent; }
.row.selected { background: #c2e0ff; border-color: #3292f0; }
.grip { width: 18px; height: 18px; margin-right: 2px; border: 1px solid #d2d2d2; border-radius: 3px; background: #fff; }
.name { flex: 1; padding-left: 2px; white-space: nowrap; }
.ic { width: 24px; height: 18px; display: grid; place-items: center; }
.ic.x { width: 18px; }
.threads { color: #333; }
.selected .threads { color: #0b6e66; }
.selected .threads svg { filter: drop-shadow(0 0 1px #2ef0e0) drop-shadow(0 0 2px #5ff5ea); }

.dialog { left: 597px; top: 344px; width: 635px; border: 1px solid #111; border-radius: 6px 6px 0 0; background: #f4f6fa; box-shadow: inset -2px -2px #35c8e8, inset 1px 1px #cde; font: 12px/16px "Noto Sans", "Open Sans", sans-serif; color: #2e3040; overflow: hidden; }
.d-title { display: flex; align-items: center; height: 25px; gap: 4px; padding: 0 3px; margin: 0 2px 0 1px; background: linear-gradient(#96b3d2, #b9d2eb); color: #111; }
.d-title span { flex: 1; font: 12px/16px Roboto, sans-serif; }
.d-close { width: 31px; height: 18px; display: grid; place-items: center; border: 1px solid #8fa9c8; border-radius: 2px; background: #c3d7ed; }
.d-close svg { width: 13px; height: 11px; }
.d-body { margin: 0 2px; padding: 5px; border: 1px solid #a9bbd6; background: #fff; }
.panel { display: grid; gap: 5px; padding: 5px; border: 1px solid #a9bbd6; background: #eff3f9; }
.group { border: 1px solid #a9bbd6; background: #fcfdff; }
.group h3 { display: flex; align-items: center; gap: 7px; height: 21px; margin: 0; padding: 0 6px; border-bottom: 1px solid #aab3c2; background: #dee2ea; color: #000; font: bold 11px/16px "Open Sans", sans-serif; }
.group h3 svg { width: 10px; height: 10px; }
.g1 { display: grid; grid-template-columns: 59px 1fr; padding: 5px 9px 6px 5px; row-gap: 6px; align-items: center; }
.lab { padding-left: 35px; }
.combo { position: relative; }
.combo select { display: block; width: 100%; height: 26px; padding: 0 20px 0 4px; border: 1px solid #0078d4; border-radius: 0; background: #fff; color: #000; appearance: none; font: 15px/20px "Open Sans", sans-serif; }
.chev { position: absolute; right: 1px; top: 1px; width: 17px; height: 24px; }
.cfg { grid-column: 2; display: flex; align-items: center; }
.cfg label { flex: 1; margin-left: 4px; font-weight: bold; }
.cfg button { width: 287px; height: 24px; margin-right: 1px; border: 1px solid #ccc; border-radius: 3px; background: #fdfdfd; color: #111; font: 14px/20px "Open Sans", sans-serif; }
input[type="checkbox"] { flex: none; appearance: none; width: 13px; height: 13px; border: 1px solid #666; border-radius: 3px; background: #f8f8f8; }
input[type="checkbox"]:checked { border-color: #0a5fb4; background: #0a5fb4; display: grid; place-items: center; }
input[type="checkbox"]:checked::before { content: ""; width: 7px; height: 4px; margin-bottom: 2px; border: solid #fff; border-width: 0 0 1px 1px; rotate: -45deg; }
.g2 { display: grid; grid-template-columns: 349px 150px; align-items: center; gap: 5px 0; padding: 5px; white-space: nowrap; }
.check { display: flex; align-items: center; gap: 8px; height: 26px; }
.spin { display: flex; height: 26px; padding: 1px; border: 1px solid #a9bbd6; background: #fff; }
.spin input { flex: 1; min-width: 0; padding: 0 3px; border: 0; background: none; color: #000; font: 14px/20px "Open Sans", sans-serif; }
.spin div { width: 15px; display: grid; grid-template-rows: 1fr 1fr; }
.spin button { display: grid; place-items: center; border: 1px solid #a8a8a8; background: #efefef; }
.spin svg { width: 7px; height: 3px; }
.d-foot { display: flex; justify-content: flex-end; gap: 7px; padding: 4px 7px 5px; }
.d-foot button { width: 100px; height: 24px; display: flex; align-items: center; padding: 0 4px 0 1px; border: 1px solid #a9bbd6; background: #f4f7fa; color: #333; font: bold 11px/16px "Liberation Sans", sans-serif; }
.d-foot svg { width: 20px; height: 20px; }
.d-foot span { flex: 1; text-align: center; }

.notes { position: absolute; left: 0; top: 0; width: 1303px; height: 750px; pointer-events: none; }
.num { font: bold 23px "Liberation Sans", sans-serif; fill: #fff; text-anchor: middle; }
```
